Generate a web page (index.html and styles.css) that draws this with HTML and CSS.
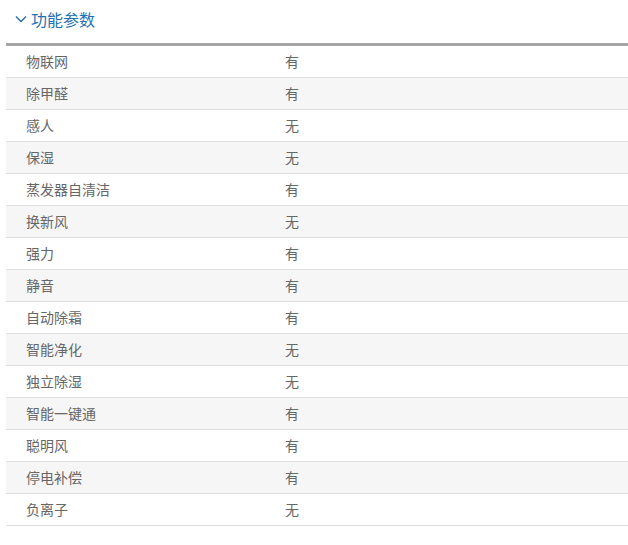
FILE: index.html
```html
<!DOCTYPE html>
<html>
<head>
<meta charset="utf-8">
<link rel="stylesheet" href="styles.css">
</head>
<body>
<div class="panel">
  <div class="title">
    <svg class="chev" width="12" height="8" viewBox="0 0 12 8"><path d="M1 1.5 L6 6.5 L11 1.5" fill="none" stroke="#1f6fb6" stroke-width="1.4"/></svg>
    <span>功能参数</span>
  </div>
  <table class="params">
    <tr><td class="k">物联网</td><td class="v">有</td></tr>
    <tr><td class="k">除甲醛</td><td class="v">有</td></tr>
    <tr><td class="k">感人</td><td class="v">无</td></tr>
    <tr><td class="k">保湿</td><td class="v">无</td></tr>
    <tr><td class="k">蒸发器自清洁</td><td class="v">有</td></tr>
    <tr><td class="k">换新风</td><td class="v">无</td></tr>
    <tr><td class="k">强力</td><td class="v">有</td></tr>
    <tr><td class="k">静音</td><td class="v">有</td></tr>
    <tr><td class="k">自动除霜</td><td class="v">有</td></tr>
    <tr><td class="k">智能净化</td><td class="v">无</td></tr>
    <tr><td class="k">独立除湿</td><td class="v">无</td></tr>
    <tr><td class="k">智能一键通</td><td class="v">有</td></tr>
    <tr><td class="k">聪明风</td><td class="v">有</td></tr>
    <tr><td class="k">停电补偿</td><td class="v">有</td></tr>
    <tr><td class="k">负离子</td><td class="v">无</td></tr>
  </table>
</div>
</body>
</html>
```
FILE: styles.css
```css
html, body { margin: 0; padding: 0; background: #fff; }
body { font-family: "Microsoft YaHei", "Noto Sans CJK SC", sans-serif; }
.panel { padding-left: 6px; }
.title {
  height: 43px;
  display: flex;
  align-items: center;
  padding-left: 9px;
  color: #1f6fb6;
  font-size: 16px;
  box-sizing: border-box;
  padding-bottom: 6px;
}
.chev { margin-right: 4px; margin-top: 1px; }
.params {
  width: 100%;
  border-collapse: collapse;
  border-top: 3px solid #a6a6a6;
}
.params td {
  height: 29px;
  padding: 0 0 2px 0;
  font-size: 14px;
  line-height: 18px;
  color: #666;
  border-bottom: 1px solid #dedede;
}
.params tr:nth-child(even) td { background: #f6f6f6; }
.params .k { padding-left: 20px; width: 259px; }
.params .v { }
```
